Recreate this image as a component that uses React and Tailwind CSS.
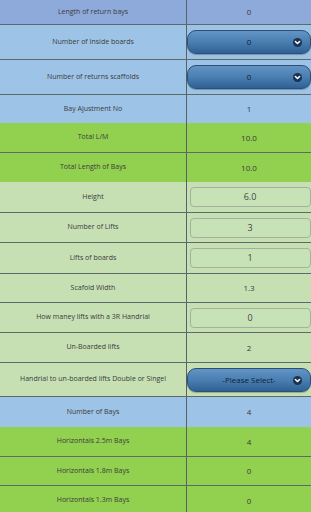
import React from 'react';

const BG = {
  peri: 'bg-[#8eaadb]',
  blue: 'bg-[#9dc3e6]',
  green: 'bg-[#92d050]',
  pale: 'bg-[#c6e0b4]',
};

const ROWS = [
  { label: 'Length of return bays', value: '0', bg: 'peri', h: 'h-[25px]' },
  { label: 'Number of Inside boards', value: '0', bg: 'blue', h: 'h-[35px]', kind: 'select' },
  { label: 'Number of returns scaffolds', value: '0', bg: 'blue', h: 'h-[35px]', kind: 'select' },
  { label: 'Bay Ajustment No', value: '1', bg: 'blue', h: 'h-[28px]', noLine: true },
  { label: 'Total L/M', value: '10.0', bg: 'green', h: 'h-[30px]' },
  { label: 'Total Length of Bays', value: '10.0', bg: 'green', h: 'h-[29px]', noLine: true },
  { label: 'Height', value: '6.0', bg: 'pale', h: 'h-[31px]', kind: 'input' },
  { label: 'Number of Lifts', value: '3', bg: 'pale', h: 'h-[30px]', kind: 'input' },
  { label: 'Lifts of boards', value: '1', bg: 'pale', h: 'h-[31px]', kind: 'input' },
  { label: 'Scafold Width', value: '1.3', bg: 'pale', h: 'h-[29px]' },
  { label: 'How maney lifts with a 3R Handrial', value: '0', bg: 'pale', h: 'h-[30px]', kind: 'input' },
  { label: 'Un-Boarded lifts', value: '2', bg: 'pale', h: 'h-[30px]' },
  { label: 'Handrial to un-boarded lifts Double or Singel', value: '-Please Select-', bg: 'pale', h: 'h-[34px]', kind: 'select' },
  { label: 'Number of Bays', value: '4', bg: 'blue', h: 'h-[30px]', noLine: true },
  { label: 'Horizontals 2.5m Bays', value: '4', bg: 'green', h: 'h-[30px]' },
  { label: 'Horizontals 1.8m Bays', value: '0', bg: 'green', h: 'h-[29px]' },
  { label: 'Horizontals 1.3m Bays', value: '0', bg: 'green', h: 'h-[30px]' },
];

const Chevron = () => (
  <span className="flex h-[9px] w-[9px] items-center justify-center rounded-full bg-[#1b3352]">
    <svg width="7" height="7" viewBox="0 0 10 10">
      <path d="M2 3.5 L5 6.5 L8 3.5" fill="none" stroke="#ffffff" strokeWidth="2.2" strokeLinecap="round" strokeLinejoin="round" />
    </svg>
  </span>
);

const Cell = ({ row }) => {
  if (row.kind === 'select') {
    return (
      <div className="relative flex h-[24px] w-[124px] items-center justify-center rounded-[9px] border border-[#2a5078] bg-gradient-to-b from-[#6394c4] via-[#4a7fb2] to-[#2f6194] shadow-[0_1px_1px_rgba(0,0,0,0.25)]">
        <span className="text-[8px] text-[#0f1f33]">{row.value}</span>
        <span className="absolute right-[8px] top-[7px]"><Chevron /></span>
      </div>
    );
  }
  if (row.kind === 'input') {
    return (
      <div className="ml-[2px] flex h-[20px] w-[121px] items-center justify-center rounded-[4px] border border-[#a3b09c] bg-[#c8e2b7]">
        <span className="text-[9px] text-[#444]">{row.value}</span>
      </div>
    );
  }
  return <span className="text-[8px] text-[#3a3a3a]">{row.value}</span>;
};

export default function App() {
  return (
    <div className="w-[311px] h-[512px] overflow-hidden bg-white font-['Open_Sans','Liberation_Sans',sans-serif]">
      {ROWS.map((row, i) => (
        <div
          key={i}
          className={`flex shrink-0 ${row.h} ${BG[row.bg]} ${row.noLine ? '' : 'border-b border-[#5c6a6a]'}`}
        >
          <div className="flex w-[186px] items-center justify-center px-1 text-center text-[7px] text-[#3b3b3b]">
            {row.label}
          </div>
          <div className="w-px bg-[#56616a]" />
          <div className="flex flex-1 items-center justify-center">
            <Cell row={row} />
          </div>
        </div>
      ))}
    </div>
  );
}
